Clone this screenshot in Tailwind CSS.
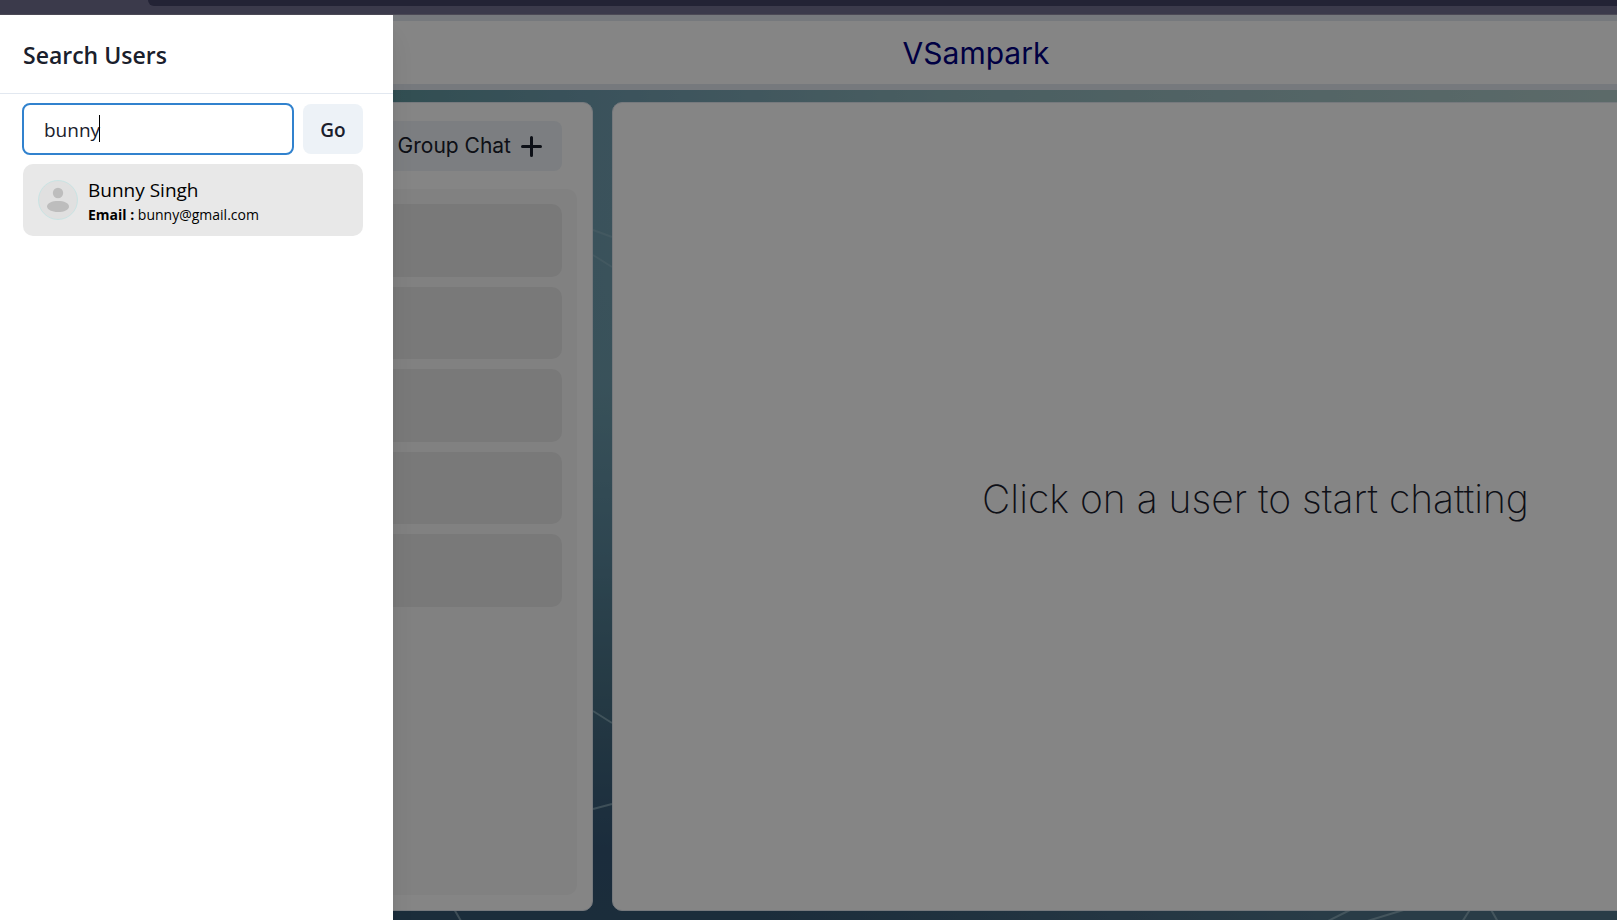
<!DOCTYPE html>
<html lang="en">
<head>
<meta charset="utf-8">
<meta name="viewport" content="width=device-width, initial-scale=1">
<title>VSampark</title>
<script src="https://cdn.jsdelivr.net/npm/@tailwindcss/browser@4"></script>
</head>
<body class="h-screen overflow-hidden flex flex-col bg-[#3b3a4b] font-['Open_Sans','Noto_Sans',sans-serif] text-[#1a202c]">
  <!-- browser toolbar edge -->
  <div class="h-[15px] shrink-0 border-b border-[#4b4955] pl-[148px]">
    <div class="h-[6px] rounded-bl-[14px] bg-[#232335]"></div>
  </div>

  <div class="relative flex-1 min-h-0 overflow-hidden">
    <div class="relative flex h-full w-[118%] flex-col font-['Inter','Open_Sans',sans-serif]">
      <svg class="absolute inset-0 h-full w-full" viewBox="0 0 1908 905" preserveAspectRatio="none" aria-hidden="true">
        <defs>
          <linearGradient id="sky" x1="0" x2="1" y1="0" y2="0">
            <stop offset="0.2" stop-color="#60969d"/><stop offset="0.31" stop-color="#709daf"/>
            <stop offset="0.5" stop-color="#8eb5bb"/><stop offset="0.85" stop-color="#b1ccca"/>
          </linearGradient>
          <linearGradient id="deep" x1="0" x2="0" y1="0" y2="1">
            <stop offset="0.1" stop-color="#709daf" stop-opacity="0"/><stop offset="0.4" stop-color="#6c9cac" stop-opacity="0.8"/>
            <stop offset="0.6" stop-color="#58859a"/><stop offset="0.75" stop-color="#476f83"/>
            <stop offset="0.92" stop-color="#345574"/><stop offset="1" stop-color="#355671"/>
          </linearGradient>
          <linearGradient id="glow" x1="0" x2="1" y1="0" y2="0">
            <stop offset="0.4" stop-color="#4f738b" stop-opacity="0"/><stop offset="0.7" stop-color="#507489"/>
          </linearGradient>
        </defs>
        <rect width="1908" height="905" fill="url(#sky)"/>
        <rect width="1908" height="905" fill="url(#deep)"/>
        <rect y="880" width="1908" height="25" fill="url(#glow)"/>
        <g stroke="#b5d4dc" stroke-opacity="0.5" stroke-width="2">
          <path stroke-opacity="0.25" d="M593 240l19 12M593 215l19 7"/>
          <path d="M593 696l19 12M593 794l19-5M454 894l7 12M1326 907l28-14M1364 907l46-14M1490 893l8 14M1462 907l9-14"/>
        </g>
      </svg>

      <header class="relative flex h-[75px] shrink-0 items-center justify-center border-y-6 border-[#e2e8f0] bg-white pl-[44px]">
        <h1 class="text-[30px] leading-9 text-[#000080]">VSampark</h1>
      </header>

      <main class="relative flex min-h-0 flex-1 gap-[19px] pt-3 pb-[9px] pr-[9px] pl-3">
        <section class="flex w-[581px] shrink-0 flex-col gap-[18px] rounded-[10px] border border-[#e2e8f0] bg-white p-[15px]" aria-label="Chats">
          <div class="flex justify-end pt-[3px] pr-[15px]">
            <button type="button" class="flex h-[50px] items-center gap-[10px] rounded-[8px] bg-[#edf2f7] px-5 text-[21px]">
              <span>New Group Chat</span>
              <svg class="size-[21px]" viewBox="0 0 21 21" fill="none" stroke="currentColor" stroke-width="3" stroke-linecap="round" aria-hidden="true"><path d="M10.500 1.500v18M1.500 10.500h18"/></svg>
            </button>
          </div>
          <div class="min-h-0 flex-1 rounded-[10px] bg-[#f8f8f8] p-[15px]">
            <ul class="grid h-[403px] grid-rows-5 gap-[10px]">
              <li class="rounded-[10px] bg-[#e8e8e8]"></li>
              <li class="rounded-[10px] bg-[#e8e8e8]"></li>
              <li class="rounded-[10px] bg-[#e8e8e8]"></li>
              <li class="rounded-[10px] bg-[#e8e8e8]"></li>
              <li class="rounded-[10px] bg-[#e8e8e8]"></li>
            </ul>
          </div>
        </section>
        <section class="flex flex-1 items-center justify-center rounded-[10px] border border-[#e2e8f0] bg-white pb-[14px]">
          <p class="text-[39px] font-extralight">Click on a user to start chatting</p>
        </section>
      </main>
    </div>

    <div class="absolute inset-0 bg-black/48"></div>

    <aside class="absolute inset-y-0 left-0 w-[393px] bg-white shadow-xl" role="dialog" aria-labelledby="drawer-title">
      <h2 id="drawer-title" class="flex h-[79px] items-center border-b border-[#e2e8f0] px-[23px] pt-[2px] text-[23px] font-semibold">Search Users</h2>
      <div class="flex flex-col gap-[9px] pt-[9px] pr-[30px] pl-[22px]">
        <form class="flex items-center gap-[9px]">
          <div class="relative min-w-0 flex-1">
            <input type="text" aria-label="Search by name or email" value="bunny" class="block h-[52px] w-full rounded-[8px] border-2 border-[#3182ce] px-5 pt-px text-[19px] outline-none">
            <span class="absolute top-3 left-[77px] h-[27px] w-px bg-black"></span>
          </div>
          <button type="button" class="h-[50px] w-[60px] rounded-[8px] bg-[#edf2f7] pt-[2px] text-[19px] font-semibold">Go</button>
        </form>
        <button type="button" class="ml-px flex h-[72px] items-center gap-[10px] rounded-[10px] bg-[#e8e8e8] px-[15px] text-left text-black">
          <svg class="size-10 shrink-0" viewBox="0 0 40 40" aria-hidden="true">
            <circle cx="20" cy="20" r="19.500" fill="#e0e0e0" stroke="#b9e3e3" stroke-width="0.600"/>
            <circle cx="20" cy="13" r="5.200" fill="#bdbdbd"/>
            <path fill="#bdbdbd" d="M9 26.500C9 23 14 21 20 21s11 2 11 5.500S26 32 20 32 9 29.500 9 26.500Z"/>
          </svg>
          <span class="flex flex-col pt-[2px]">
            <span class="text-[19px] leading-7">Bunny Singh</span>
            <span class="text-[14px] leading-[22px]"><b>Email : </b>bunny@gmail.com</span>
          </span>
        </button>
      </div>
    </aside>
  </div>
</body>
</html>
